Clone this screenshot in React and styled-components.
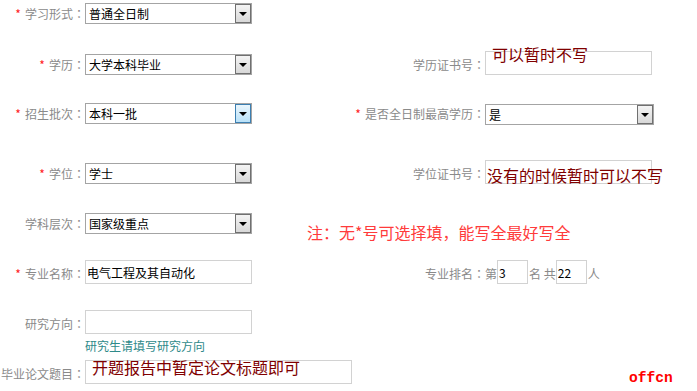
import React from "react";
import styled, { createGlobalStyle } from "styled-components";

const Global = createGlobalStyle`
  html, body { margin: 0; padding: 0; background: #fff; }
  body { font-family: "Noto Sans CJK SC", "Noto Sans", sans-serif; }
`;

const Page = styled.div`
  position: relative;
  width: 697px;
  height: 391px;
  overflow: hidden;
  background: #fff;
  font-family: "Noto Sans CJK SC", "Noto Sans", sans-serif;
  font-size: 12px;
`;

const Row = styled.div`
  display: flex;
  align-items: flex-end;
  height: ${(p) => p.$h}px;
`;

const Label = styled.div`
  flex: none;
  width: ${(p) => p.$w || 85}px;
  height: 21px;
  line-height: 21px;
  text-align: right;
  white-space: nowrap;
  color: #8a8a8a;
  font-size: 12px;
`;

const Colon = styled.span`
  font-family: "Noto Sans CJK JP", "Noto Sans CJK SC", sans-serif;
`;

const Star = styled.span`
  color: #ff2020;
  margin-right: 4px;
`;

const SelectBox = styled.div`
  box-sizing: border-box;
  flex: none;
  display: flex;
  align-items: stretch;
  width: ${(p) => p.$w || 167}px;
  height: 21px;
  border: 1px solid #a4a4a4;
  background: #fff;
  margin-bottom: ${(p) => p.$mb || 0}px;
`;

const SelectValue = styled.div`
  flex: 1;
  padding-left: 3px;
  line-height: 19px;
  font-size: 12px;
  color: #000;
  white-space: nowrap;
`;

const ArrowButton = styled.div`
  box-sizing: border-box;
  flex: none;
  width: 16px;
  display: flex;
  align-items: center;
  justify-content: center;
  border: 1px solid ${(p) => (p.$focus ? "#3c7fb1" : "#707070")};
  background: ${(p) =>
    p.$focus
      ? "linear-gradient(#eaf6fd, #b9e1f8)"
      : "linear-gradient(#f4f4f4, #d8d8d8)"};
`;

const Triangle = styled.span`
  width: 0;
  height: 0;
  border-left: 4px solid transparent;
  border-right: 4px solid transparent;
  border-top: 4px solid #000;
`;

const InputWrap = styled.div`
  position: relative;
  flex: none;
`;

const TextInput = styled.input`
  box-sizing: border-box;
  display: block;
  flex: none;
  width: ${(p) => p.$w || 167}px;
  height: 24px;
  margin: 0;
  padding: 0 1px;
  border: 1px solid #d2d2d2;
  outline: none;
  background: #fff;
  font-family: "Noto Sans CJK SC", "Noto Sans", sans-serif;
  font-size: 12px;
  color: #000;
`;

const Annotation = styled.div`
  position: absolute;
  top: ${(p) => p.$top}px;
  left: ${(p) => p.$left}px;
  white-space: nowrap;
  font-size: 16px;
  line-height: 16px;
  color: #800000;
  pointer-events: none;
`;

const Note = styled.div`
  margin-left: 55px;
  margin-bottom: -6px;
  font-size: 16px;
  line-height: 16px;
  color: #ff3b3b;
  white-space: nowrap;
`;

const Inline = styled.span`
  flex: none;
  height: 21px;
  line-height: 21px;
  color: #8a8a8a;
  font-size: 12px;
  white-space: nowrap;
  margin: ${(p) => p.$m || "0"};
`;

const Help = styled.div`
  margin-left: 85px;
  margin-top: 4px;
  line-height: 16px;
  height: 16px;
  font-size: 12px;
  color: #2f8a8a;
`;

const Logo = styled.div`
  position: absolute;
  left: 629px;
  top: 369px;
  font-family: "Liberation Mono", monospace;
  font-weight: bold;
  font-size: 14.6px;
  line-height: 18px;
  color: #ff0000;
`;

const Select = ({ value, w, focus, mb }) => (
  <SelectBox $w={w} $mb={mb}>
    <SelectValue>{value}</SelectValue>
    <ArrowButton $focus={focus}>
      <Triangle />
    </ArrowButton>
  </SelectBox>
);

const FieldLabel = ({ text, required, w }) => (
  <Label $w={w}>
    {required && <Star>*</Star>}
    {text}
    <Colon>：</Colon>
  </Label>
);

export default function App() {
  return (
    <Page>
      <Global />
      <Row $h={24}>
        <FieldLabel required text="学习形式" />
        <Select value="普通全日制" />
      </Row>

      <Row $h={51}>
        <FieldLabel required text="学历" />
        <Select value="大学本科毕业" />
        <FieldLabel w={233} text="学历证书号" />
        <InputWrap>
          <TextInput readOnly defaultValue="" />
          <Annotation $top={-5} $left={7}>可以暂时不写</Annotation>
        </InputWrap>
      </Row>

      <Row $h={49}>
        <FieldLabel required text="招生批次" />
        <Select value="本科一批" focus />
        <FieldLabel w={233} required text="是否全日制最高学历" />
        <Select value="是" w={169} mb={-1} />
      </Row>

      <Row $h={60}>
        <FieldLabel required text="学位" />
        <Select value="学士" />
        <FieldLabel w={233} text="学位证书号" />
        <InputWrap>
          <TextInput readOnly defaultValue="" />
          <Annotation $top={7} $left={2}>没有的时候暂时可以不写</Annotation>
        </InputWrap>
      </Row>

      <Row $h={50}>
        <FieldLabel text="学科层次" />
        <Select value="国家级重点" />
        <Note>注：无*号可选择填，能写全最好写全</Note>
      </Row>

      <Row $h={50}>
        <FieldLabel required text="专业名称" />
        <TextInput readOnly defaultValue="电气工程及其自动化" />
        <FieldLabel w={233} text="专业排名" />
        <Inline>第</Inline>
        <TextInput readOnly defaultValue="3" $w={31} />
        <Inline $m="0 0 0 1px">名 共</Inline>
        <TextInput readOnly defaultValue="22" $w={31} />
        <Inline $m="0 0 0 1px">人</Inline>
      </Row>

      <Row $h={50}>
        <FieldLabel text="研究方向" />
        <TextInput readOnly defaultValue="" />
      </Row>
      <Help>研究生请填写研究方向</Help>

      <Row $h={30}>
        <FieldLabel text="毕业论文题目" />
        <InputWrap>
          <TextInput readOnly defaultValue="" $w={267} />
          <Annotation $top={-1} $left={7}>开题报告中暂定论文标题即可</Annotation>
        </InputWrap>
      </Row>

      <Logo>offcn</Logo>
    </Page>
  );
}
